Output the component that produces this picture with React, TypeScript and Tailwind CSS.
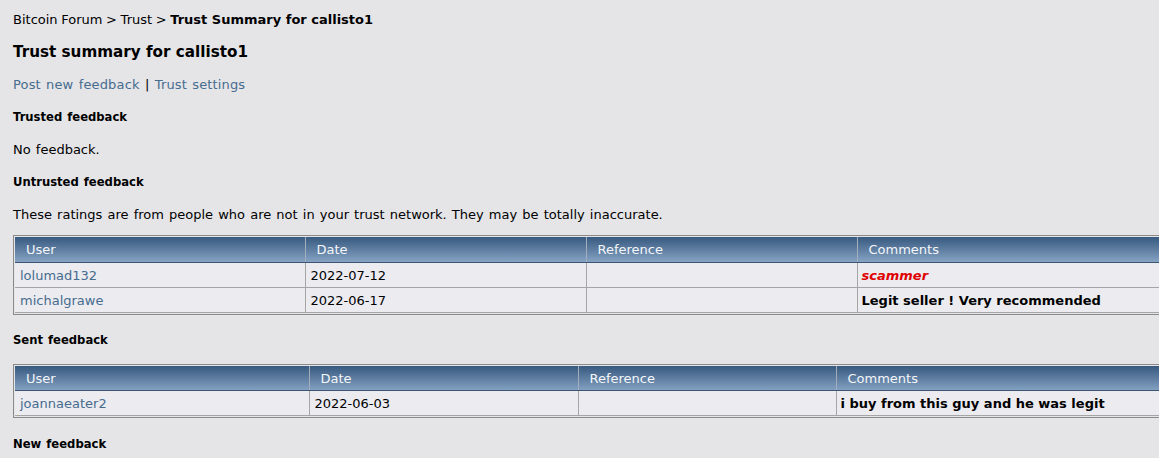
import React from "react";

const font = { fontFamily: "Verdana, 'DejaVu Sans', sans-serif" };

type Row = { user: string; date: string; ref: string; comment: React.ReactNode };

function FeedbackTable({ widths, rows }: { widths: number[]; rows: Row[] }) {
  return (
    <div className="w-[1200px] border border-[#8a8a8a] p-px">
      <table className="table-fixed border-collapse w-full text-[13px]">
        <colgroup>
          {widths.map((w, i) => (
            <col key={i} style={{ width: w }} />
          ))}
          <col />
        </colgroup>
        <thead>
          <tr className="h-[25px] bg-gradient-to-b from-[#385a80] to-[#86a3c3] text-[#f4f6fa]">
            {["User", "Date", "Reference", "Comments"].map((h) => (
              <th key={h} className="border-r border-b border-r-[#a3adbb] border-b-[#3b5674] text-left font-normal pl-[11px] pt-px">
                {h}
              </th>
            ))}
          </tr>
        </thead>
        <tbody>
          {rows.map((r, i) => (
            <tr key={i} className="h-[25px] bg-[#ebebf0]">
              <td className="border-r border-b border-[#a5a5a5] pl-[5px] pt-[2px] text-[#476c8e]">{r.user}</td>
              <td className="border-r border-b border-[#a5a5a5] pl-[5px] pt-[2px] text-black">{r.date}</td>
              <td className="border-r border-b border-[#a5a5a5] pl-[5px] pt-[2px]">{r.ref}</td>
              <td className="border-r border-b border-[#a5a5a5] pl-[4px] pt-[2px] font-bold text-black">{r.comment}</td>
            </tr>
          ))}
        </tbody>
      </table>
    </div>
  );
}

export default function App() {
  return (
    <div className="w-[1159px] h-[458px] overflow-hidden bg-[#e5e5e8] text-black [word-spacing:1px]" style={font}>
      <div className="pl-[13px] pt-[12px]">
        <div className="h-[16px] leading-[16px] text-[13px] [word-spacing:-0.5px]">
          <span>Bitcoin Forum</span> &gt; <span>Trust</span> &gt; <b className="[word-spacing:0px]">Trust Summary for callisto1</b>
        </div>
        <h1 className="mt-[14px] h-[20px] leading-[20px] text-[15.2px] font-bold [word-spacing:0px]">Trust summary for callisto1</h1>
        <div className="mt-[15px] h-[16px] leading-[16px] text-[13px] tracking-[0.15px]">
          <span className="text-[#476c8e]">Post new feedback</span> | <span className="text-[#476c8e]">Trust settings</span>
        </div>
        <div className="mt-[17px] h-[14px] leading-[14px] text-[11.6px] font-bold">Trusted feedback</div>
        <div className="mt-[18px] h-[16px] leading-[16px] text-[13px]">No feedback.</div>
        <div className="mt-[17px] h-[14px] leading-[14px] text-[11.6px] font-bold">Untrusted feedback</div>
        <div className="mt-[18px] h-[16px] leading-[16px] text-[13px]">
          These ratings are from people who are not in your trust network. They may be totally inaccurate.
        </div>
        <div className="mt-[12px] [word-spacing:0px]">
          <FeedbackTable
            widths={[290, 281, 271]}
            rows={[
              { user: "lolumad132", date: "2022-07-12", ref: "", comment: <span className="italic text-[#e00000]">scammer</span> },
              { user: "michalgrawe", date: "2022-06-17", ref: "", comment: "Legit seller ! Very recommended" },
            ]}
          />
        </div>
        <div className="mt-[18px] h-[14px] leading-[14px] text-[11.6px] font-bold">Sent feedback</div>
        <div className="mt-[17px] [word-spacing:0px]">
          <FeedbackTable
            widths={[294, 269, 258]}
            rows={[{ user: "joannaeater2", date: "2022-06-03", ref: "", comment: "i buy from this guy and he was legit" }]}
          />
        </div>
        <div className="mt-[19px] h-[14px] leading-[14px] text-[11.6px] font-bold">New feedback</div>
      </div>
    </div>
  );
}
